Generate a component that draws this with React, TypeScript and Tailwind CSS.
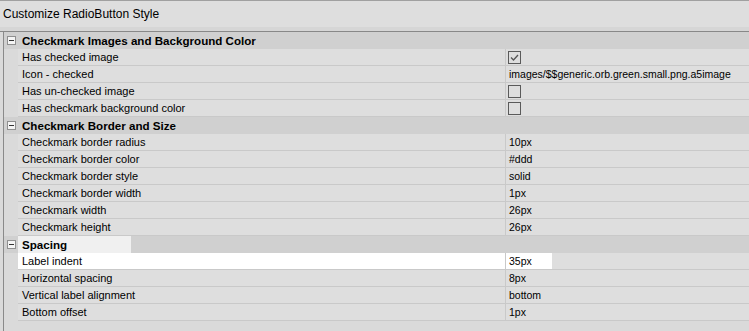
import React from 'react';

type Item = { label: string; value?: string; check?: boolean; hi?: boolean };
type Section = { title: string; hi?: boolean; items: Item[] };

const sections: Section[] = [
  {
    title: 'Checkmark Images and Background Color',
    items: [
      { label: 'Has checked image', check: true },
      { label: 'Icon - checked', value: 'images/$$generic.orb.green.small.png.a5image' },
      { label: 'Has un-checked image', check: false },
      { label: 'Has checkmark background color', check: false },
    ],
  },
  {
    title: 'Checkmark Border and Size',
    items: [
      { label: 'Checkmark border radius', value: '10px' },
      { label: 'Checkmark border color', value: '#ddd' },
      { label: 'Checkmark border style', value: 'solid' },
      { label: 'Checkmark border width', value: '1px' },
      { label: 'Checkmark width', value: '26px' },
      { label: 'Checkmark height', value: '26px' },
    ],
  },
  {
    title: 'Spacing',
    hi: true,
    items: [
      { label: 'Label indent', value: '35px', hi: true },
      { label: 'Horizontal spacing', value: '8px' },
      { label: 'Vertical label alignment', value: 'bottom' },
      { label: 'Bottom offset', value: '1px' },
    ],
  },
];

function CheckBox({ checked }: { checked: boolean }) {
  return (
    <div className="w-[13px] h-[13px] border border-[#5a5a5a] flex items-center justify-center">
      {checked && (
        <svg width="11" height="11" viewBox="0 0 11 11">
          <path d="M2 5.5 L4.5 8 L9 3" fill="none" stroke="#555" strokeWidth="1.3" />
        </svg>
      )}
    </div>
  );
}

function Row({ item }: { item: Item }) {
  return (
    <div className="flex h-[17px]">
      <div className="w-[14px] shrink-0" />
      <div
        className={
          'w-[487px] shrink-0 flex items-center pl-[4px] border-b border-[#c9c9c9] ' +
          (item.hi ? 'bg-white' : 'bg-[#dedede]')
        }
      >
        {item.label}
      </div>
      <div className="flex-1 flex border-b border-l border-[#c9c9c9] bg-[#dedede]">
        <div className={'flex items-center pl-[2px] text-[10.5px] ' + (item.hi ? 'bg-white w-[46px]' : '')}>
          {item.check !== undefined ? (
            <CheckBox checked={item.check} />
          ) : (
            <span className="pl-[1px]">{item.value}</span>
          )}
        </div>
      </div>
    </div>
  );
}

export default function App() {
  return (
    <div className="w-[749px] h-[331px] overflow-hidden bg-[#dadada] text-black font-['Liberation_Sans',Arial,sans-serif] text-[11px] leading-none">
      <div className="border-t border-[#a0a0a0] h-[27px] flex items-center pl-[3px] text-[12px] bg-[#dedede]">
        Customize RadioButton Style
      </div>
      <div className="h-[5px] bg-[#d6d6d6] border-b border-[#888]" />
      <div className="ml-[3px] border-l border-[#8a8a8a] h-full">
        {sections.map((s) => (
          <div key={s.title}>
            <div className="flex items-center h-[17px] bg-[#d0d0d0]">
              <div className="w-[14px] shrink-0 flex justify-center">
                <div className="w-[9px] h-[9px] border border-[#8f8f8f] bg-[#f4f4f4] flex items-center justify-center">
                  <div className="w-[5px] h-px bg-[#333]" />
                </div>
              </div>
              <div
                className={
                  'h-full flex items-center pl-[4px] font-bold text-[11.6px] ' +
                  (s.hi ? 'bg-[#f0f0f0] w-[113px]' : '')
                }
              >
                {s.title}
              </div>
            </div>
            {s.items.map((it) => (
              <Row key={it.label} item={it} />
            ))}
          </div>
        ))}
      </div>
    </div>
  );
}
